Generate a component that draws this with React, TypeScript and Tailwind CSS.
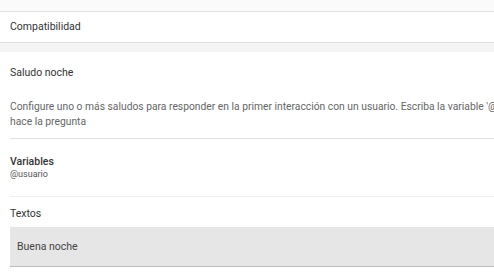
export default function App() {
  return (
    <div className="w-[494px] h-[278px] overflow-hidden bg-white font-['Roboto',sans-serif]">
      <div className="h-[11px] bg-[#fafafa] border-b border-[#e0e0e0] box-content" />
      <div className="h-[30px] flex items-center px-[10px] text-[10.5px] text-[#333] border-b border-[#e0e0e0] box-content">
        Compatibilidad
      </div>
      <div className="h-[9px] bg-[#f4f4f4]" />
      <div className="pl-[10px] w-[800px]">
        <div className="pt-[14px] text-[10.5px] text-[#333] leading-[14px]">Saludo noche</div>
        <div className="pt-[19px] text-[10.3px] text-[#666] leading-[15px] whitespace-nowrap">
          Configure uno o más saludos para responder en la primer interacción con un usuario. Escriba la variable '@usuario' donde quiera que se muestre el nombre de quien
          <br />
          hace la pregunta
        </div>
        <div className="mt-[9px] border-t border-[#e0e0e0]" />
        <div className="pt-[16px] text-[10.5px] font-medium text-[#333] leading-[13px]">Variables</div>
        <div className="text-[9px] text-[#555] leading-[12px]">@usuario</div>
        <div className="mt-[16px] border-t border-[#eeeeee]" />
        <div className="pt-[10px] text-[10.5px] text-[#333] leading-[14px]">Textos</div>
        <div className="mt-[6px] h-[40px] bg-[#e6e6e6] border-b border-[#bdbdbd] flex items-center px-[7px] text-[10.5px] text-[#444]">
          Buena noche
        </div>
      </div>
    </div>
  );
}
